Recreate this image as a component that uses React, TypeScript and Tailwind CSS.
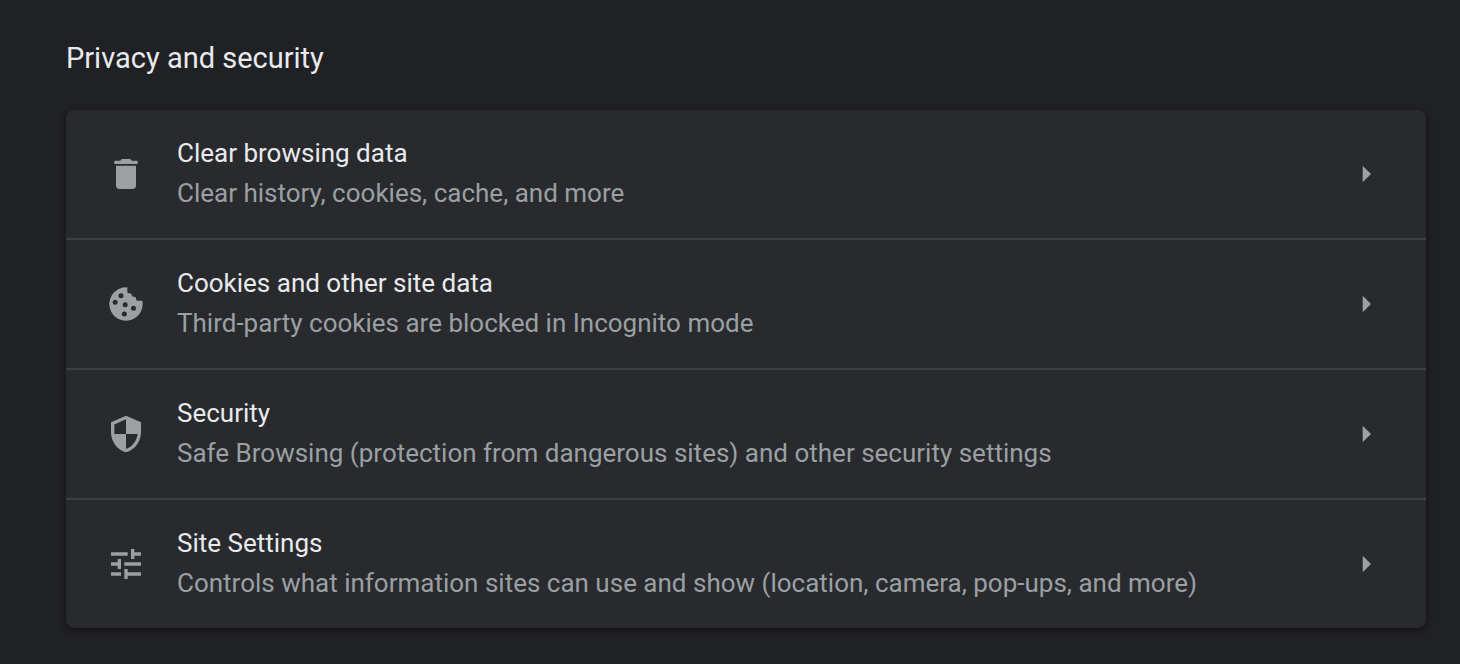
import type { ReactNode } from "react";
import { MdDelete, MdTune } from "react-icons/md";

function CookieIcon() {
  return (
    <svg viewBox="0 0 24 24" className="size-10" fill="currentColor" fillRule="evenodd" aria-hidden="true">
      <path d="M12 2h.8v2.6a1 1 0 0 0 1 1h.6a1 1 0 0 1 1 1a1 1 0 0 0 1 1h.6a1 1 0 0 1 1 1v.4a1 1 0 0 0 1 1h2.8A10 10 0 1 1 12 2zM9 5.5a1.5 1.5 0 1 0 0 3a1.5 1.5 0 1 0 0-3zM5.5 9.5a1.5 1.5 0 1 0 0 3a1.5 1.5 0 1 0 0-3zM11.5 10.9a1.5 1.5 0 1 0 0 3a1.5 1.5 0 1 0 0-3zM16.5 13a1.5 1.5 0 1 0 0 3a1.5 1.5 0 1 0 0-3zM11 16.5a1.5 1.5 0 1 0 0 3a1.5 1.5 0 1 0 0-3z" />
    </svg>
  );
}

function ShieldIcon() {
  return (
    <svg viewBox="0 0 24 24" className="size-10" fill="currentColor" fillRule="evenodd" aria-hidden="true">
      <path d="M12 1L3 5v6c0 5.55 3.84 10.74 9 12 5.16-1.26 9-6.45 9-12V5l-9-4zM12 3.2V12H5V6.3l7-3.1zM12 12h7c-.53 4.12-3.28 7.79-7 8.94V12z" />
    </svg>
  );
}

function ArrowIcon() {
  return (
    <svg viewBox="0 0 24 24" className="size-10 shrink-0" fill="currentColor" aria-hidden="true">
      <path d="M10 7l5 5-5 5z" />
    </svg>
  );
}

type Setting = {
  icon: ReactNode;
  title: string;
  description: string;
};

const settings: Setting[] = [
  {
    icon: <MdDelete size={40} />,
    title: "Clear browsing data",
    description: "Clear history, cookies, cache, and more",
  },
  {
    icon: <CookieIcon />,
    title: "Cookies and other site data",
    description: "Third-party cookies are blocked in Incognito mode",
  },
  {
    icon: <ShieldIcon />,
    title: "Security",
    description: "Safe Browsing (protection from dangerous sites) and other security settings",
  },
  {
    icon: <MdTune size={40} />,
    title: "Site Settings",
    description: "Controls what information sites can use and show (location, camera, pop-ups, and more)",
  },
];

function SettingRow({ icon, title, description }: Setting) {
  return (
    <button className="w-full flex items-center px-10 py-[23px] text-left text-[#9aa0a3] hover:bg-white/5">
      <span className="shrink-0">{icon}</span>
      <span className="flex-1 min-w-0 flex flex-col pl-[31px] pb-0.5 text-[26px] leading-10">
        <span className="text-[#e8eaed]">{title}</span>
        <span>{description}</span>
      </span>
      <ArrowIcon />
    </button>
  );
}

function App() {
  return (
    <main className="min-h-screen bg-[#202124] pl-[66px] pr-[34px] py-9 font-['Roboto',sans-serif]">
      <h2 className="text-[29px] leading-11 text-[#e8eaed]">Privacy and security</h2>

      <section className="mt-[30px] flex flex-col divide-y-2 divide-[#3e3f42] overflow-hidden rounded-lg bg-[#292a2d] shadow-[0_2px_4px_rgba(0,0,0,0.3),0_2px_6px_2px_rgba(0,0,0,0.15)]">
        {settings.map((setting) => (
          <SettingRow key={setting.title} {...setting} />
        ))}
      </section>
    </main>
  );
}

export default App;
